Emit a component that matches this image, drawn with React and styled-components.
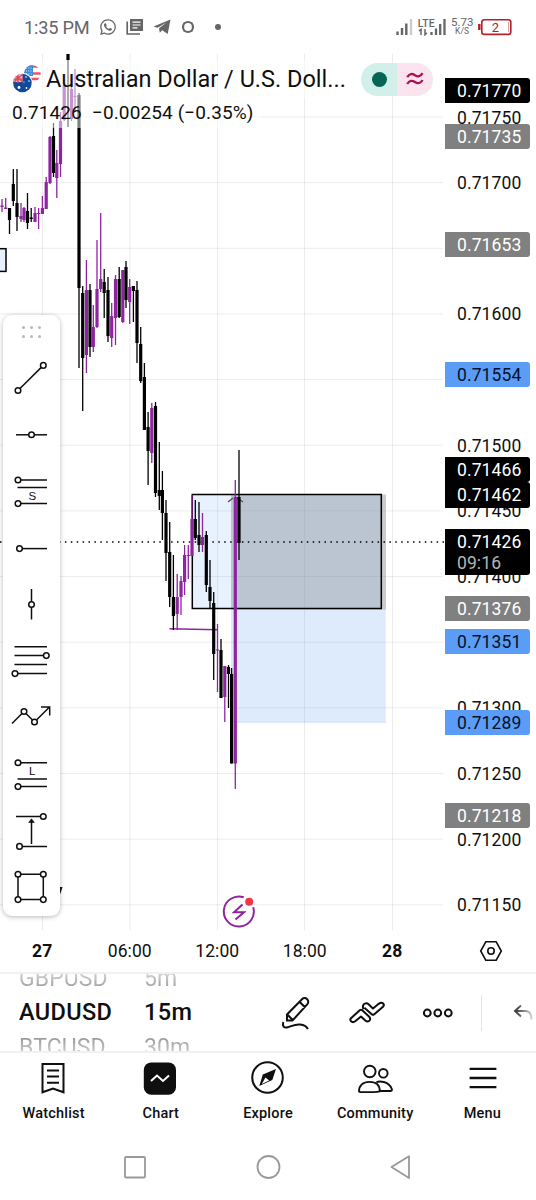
import React from "react";
import styled, { createGlobalStyle } from "styled-components";
import { FaWhatsapp } from "react-icons/fa";

const Global = createGlobalStyle`
  * { box-sizing: border-box; }
  body { margin: 0; background: #fff; font-family: Roboto, "Liberation Sans", sans-serif; color: #0f0f0f; }
`;

const PURPLE = "#8e24a0";

const Screen = styled.div`
  width: 536px;
  height: 1200px;
  display: flex;
  flex-direction: column;
  background: #fff;
  overflow: hidden;
`;

/* ---------- status bar ---------- */
const StatusBar = styled.header`
  height: 54px;
  flex: none;
  display: flex;
  align-items: center;
  justify-content: space-between;
  padding: 0 24px;
  color: #666;
`;
const StatusGroup = styled.div`
  display: flex;
  align-items: center;
  gap: ${(p) => p.$gap}px;
`;
const Clock = styled.span`
  font-size: 18.2px;
  letter-spacing: -0.2px;
  width: 66px;
  white-space: nowrap;
`;
const Speed = styled.span`
  font-size: 11.5px;
  line-height: 9px;
  text-align: center;
  width: 22px;
  small { display: block; font-size: 8.5px; line-height: 9px; }
`;

/* ---------- chart ---------- */
const ChartArea = styled.main`
  position: relative;
  height: 920px;
  flex: none;
  display: grid;
  grid-template: 876px 42px / 445px 91px;
  border-bottom: 2px solid #f1f1f1;
`;
const Plot = styled.svg`
  display: block;
`;
const PriceAxis = styled.aside`
  position: relative;
`;
const priceColors = {
  plain: ["transparent", "#0f0f0f"],
  black: ["#000", "#fff"],
  gray: ["#808080", "#fff"],
  blue: ["#5b9cf6", "#04122b"],
};
const Price = styled.div`
  position: absolute;
  left: 0;
  top: ${(p) => p.$y - 54 - 12.5}px;
  width: 85px;
  height: ${(p) => (p.$tall ? 46 : 25.3)}px;
  padding-left: 12px;
  border-radius: 0 3px 3px 0;
  font-size: 17.5px;
  line-height: 26.6px;
  letter-spacing: 0.1px;
  background: ${(p) => priceColors[p.$kind][0]};
  color: ${(p) => priceColors[p.$kind][1]};
  z-index: ${(p) => (p.$kind === "plain" ? 0 : 1)};
`;
const Countdown = styled.div`
  line-height: 15px;
  color: #b5b5b5;
`;
const TimeAxis = styled.div`
  display: flex;
  align-items: center;
  margin-left: -1.5px;
`;
const TimeLabel = styled.span`
  width: 87.5px;
  flex: none;
  text-align: center;
  font-size: 17.5px;
  letter-spacing: 0.1px;
  font-weight: ${(p) => (p.$bold ? 700 : 400)};
`;
const AxisSettings = styled.div`
  display: flex;
  align-items: center;
  justify-content: center;
`;
const Legend = styled.section`
  position: absolute;
  left: 0;
  top: 6px;
  width: 436px;
  height: 68px;
`;
const LegendTitle = styled.div`
  display: flex;
  align-items: center;
  height: 38px;
  padding-left: 12px;
  background: linear-gradient(to right, rgba(255, 255, 255, 0.5) 350px, transparent 350px);
`;
const PairName = styled.h1`
  margin: 0 0 0 4px;
  width: 314.5px;
  font-size: 23.5px;
  font-weight: 400;
  white-space: nowrap;
`;
const LegendValues = styled.div`
  display: flex;
  gap: 10px;
  width: 262px;
  height: 30px;
  padding-left: 12px;
  font-size: 19px;
  line-height: 29px;
  letter-spacing: 0.12px;
  white-space: nowrap;
  background: rgba(255, 255, 255, 0.5);
`;
const Pill = styled.div`
  display: flex;
  width: 72px;
  height: 33px;
  flex: none;
  border-radius: 17px;
  overflow: hidden;
`;
const PillHalf = styled.div`
  flex: 1;
  display: flex;
  align-items: center;
  justify-content: center;
  background: ${(p) => p.$bg};
`;
const MarketDot = styled.i`
  width: 15px;
  height: 15px;
  margin-left: 2px;
  border-radius: 50%;
  background: #056656;
`;

const DrawPanel = styled.div`
  position: absolute;
  left: 3px;
  top: 260.5px;
  width: 57px;
  height: 601px;
  padding-top: 11px;
  border-radius: 9px;
  background: #fff;
  box-shadow: 0 1px 5px rgba(0, 0, 0, 0.28);
  display: flex;
  flex-direction: column;
  align-items: center;
`;
const Grip = styled.div`
  display: grid;
  grid-template-columns: repeat(3, 3px);
  align-content: start;
  gap: 6px 4.7px;
  height: 24.2px;
  i { width: 3px; height: 3px; border-radius: 50%; background: #b8b8b8; }
`;
const Tool = styled.button`
  width: 56px;
  height: 56.6px;
  flex: none;
  padding: 0;
  border: 0;
  margin-right: 1px;
  background: none;
  display: flex;
  align-items: center;
  justify-content: center;
  svg { stroke: #0f0f0f; stroke-width: 1.5; fill: none; overflow: visible; }
  circle { fill: #fff; }
  text { stroke: none; fill: #0f0f0f; font-size: 11.5px; text-anchor: middle; }
`;

/* ---------- bottom ---------- */
const QuickBar = styled.section`
  height: 79px;
  flex: none;
  display: flex;
  border-bottom: 2px solid #f1f1f1;
  overflow: hidden;
`;
const Wheel = styled.div`
  width: ${(p) => p.$width}px;
  padding: 2px 0 0 19px;
  display: flex;
  flex-direction: column;
  justify-content: center;
  flex: none;
`;
const WheelItem = styled.span`
  height: ${(p) => (p.$active ? 35 : 34.5)}px;
  line-height: ${(p) => (p.$active ? 33 : 34.5)}px;
  flex: none;
  font-size: ${(p) => (p.$active ? 23.5 : 23)}px;
  font-weight: ${(p) => (p.$active ? 500 : 400)};
  letter-spacing: ${(p) => (p.$active ? 0.35 : 0.1)}px;
  ${(p) => !p.$active && `color: transparent; background-clip: text; background-image: linear-gradient(${p.$dir}, #999 20%, #ddd 75%);`}
`;
const Actions = styled.div`
  flex: 1;
  display: flex;
  align-items: center;
  margin-left: -1.5px;
`;
const Action = styled.button`
  width: 71px;
  flex: none;
  padding: 0;
  border: 0;
  background: none;
  display: flex;
  justify-content: center;
`;
const Divider = styled.i`
  width: 1px;
  height: 36px;
  margin: 0 31px 0 7px;
  background: #e4e4e4;
`;
const Tabs = styled.nav`
  height: 76px;
  flex: none;
  display: flex;
`;
const Tab = styled.a`
  flex: 1;
  display: flex;
  flex-direction: column;
  align-items: center;
  padding-top: 8px;
  font-size: 14.5px;
  font-weight: 500;
  letter-spacing: 0.2px;
  line-height: 18px;
  gap: 8px;
  svg { margin-right: 1px; }
`;
const SystemNav = styled.footer`
  flex: 1;
  display: flex;
  justify-content: center;
  padding: 25px 1px 0 0;
  gap: 107px;
`;

const grid = {
  v: [42.5, 130, 217.5, 304.5, 392.5],
  h: Array.from({ length: 13 }, (_, i) => 117 + i * 65.65),
};

/* x, high, low, body top, body bottom, bullish */
const candles = [
  [2, 199, 212, 205.5, 207, 1], [5.7, 198, 209, 207.5, 209, 1], [9.5, 208, 234, 208, 220, 0],
  [13.3, 169, 206, 184, 201, 0], [17, 169, 231, 203, 217, 0], [21, 203, 222, 216, 219, 1],
  [24, 207, 222, 208, 220, 1], [27.5, 193, 229, 211, 223, 0], [31.2, 208, 222, 217.5, 219, 0],
  [35, 207, 222, 213, 222, 1], [38.6, 208, 229, 213, 214, 1], [42.4, 196, 214, 208, 214, 1],
  [46.2, 177, 209, 182, 209, 1], [50, 136, 184, 137, 183, 1], [53.5, 123, 177, 136, 173, 0],
  [56.8, 150, 198, 163, 178, 1], [60.5, 112, 177, 121, 164, 1], [64.2, 83, 121, 85, 120, 1],
  [68, 54, 127, 54, 60, 0], [71.5, 78, 121, 89, 119, 1], [75, 69, 112, 96, 97, 1],
  [79, 93, 368, 95, 288, 0], [82.7, 286, 411, 293, 358, 0], [86.4, 260, 373, 290, 355, 1],
  [90, 284, 357, 290, 347, 0], [93.3, 305, 352, 327, 347, 1], [97, 240, 328, 289, 327, 1],
  [100.7, 213, 292, 279, 289, 1], [104.2, 269, 318, 282, 293, 0], [108, 277, 342, 290, 336, 0],
  [111.7, 303, 347, 316, 338, 1], [115.5, 275, 345, 279, 318, 1], [119.2, 267, 318, 279, 317, 0],
  [122.8, 270, 323, 270, 322, 1], [126, 261, 308, 267, 300, 0], [129.7, 279, 324, 287, 302, 1],
  [133.4, 286, 322, 286, 291, 0], [137, 281, 363, 290, 343, 0], [140.7, 327, 383, 344, 381, 0],
  [144.4, 363, 430, 377, 430, 0], [148.1, 412, 485, 427, 451, 0], [151.8, 403, 463, 408, 453, 1],
  [155.5, 402, 497, 406, 493, 0], [159.3, 442, 510, 490, 496, 0], [162.4, 471, 540, 490, 513, 0],
  [166, 500, 581, 513, 553, 0], [169.7, 522, 607, 552, 597, 0], [173.4, 555, 630, 597, 616, 0],
  [177.2, 574, 630, 597, 614, 1], [181, 576, 615, 581, 597, 1], [184.6, 545, 595, 555, 582, 1],
  [188.3, 545, 579, 555, 556, 1], [192, 495, 556, 519, 556, 1], [195.3, 500, 540, 519, 538, 0],
  [199, 502, 552, 535, 545, 0], [202.5, 513, 552, 537, 545, 1], [206.3, 531, 592, 535, 585, 0],
  [210, 560, 608, 587, 601, 0], [213.7, 592, 680, 603, 654, 0], [217.5, 624, 692, 649.5, 650.5, 1],
  [221, 639, 698, 650, 698, 0], [224.8, 666, 722, 666, 697, 1], [228.5, 665, 708, 667, 674, 0],
  [231.6, 668, 763.5, 674, 763.5, 0], [235.3, 480, 789, 497, 763.5, 1], [239, 450, 560, 497, 543, 0],
];

function Chart() {
  return (
    <Plot width="445" height="876" viewBox="0 54 445 876">
      <g stroke="#000" strokeOpacity=".075" strokeWidth="1">
        {grid.v.map((x) => <line key={x} x1={x} x2={x} y1="54" y2="930" />)}
        {grid.h.map((y) => <line key={y} x1="0" x2="443" y1={y} y2={y} />)}
      </g>
      <rect x="-4" y="248.7" width="10" height="22.7" fill="#e6f0fe" stroke="#000" strokeWidth="1.5" />
      <rect x="231" y="494.5" width="155" height="115" fill="#808080" fillOpacity=".41" />
      <rect x="192.3" y="494.7" width="189.5" height="113.8" fill="#5b9cf6" fillOpacity=".14" />
      <rect x="231" y="609" width="154.7" height="113.5" fill="#5b9cf6" fillOpacity=".2" />
      <path d="M231 722.2H385.7" stroke="#5b9cf6" strokeOpacity=".2" />
      <rect x="192.3" y="494.5" width="189" height="114" fill="none" stroke="#000" strokeWidth="1.5" />
      <path d="M228 502l5-4M243 502l-6-4" stroke="#555" strokeWidth="1.5" />
      <path d="M169.5 628.8L217.5 629.8" stroke={PURPLE} strokeWidth="1.4" />
      <line x1="0" x2="445" y1="542" y2="542" stroke="#000" strokeWidth="1.5" strokeDasharray="1.5 4.4" />
      {candles.map(([x, hi, lo, top, bottom, up]) => (
        <g key={x} fill={up ? PURPLE : "#000"}>
          <rect x={x - 0.65} y={hi} width="1.3" height={lo - hi} />
          <rect x={x - 1.6} y={top} width="3.2" height={bottom - top} />
        </g>
      ))}
      <path d="M59 887h3.5l-2 6.5h-1.5z" fill="#111" />
      <g fill="none" stroke={PURPLE} strokeWidth="2">
        <path d="M243.7 897.3A15 15 0 1 0 253.2 907.2" />
        <path d="M242.5 904.5L234 912.3H244L235.5 919.5" strokeLinejoin="miter" />
      </g>
      <circle cx="249.2" cy="901.7" r="4" fill="#f23645" />
    </Plot>
  );
}

function Flags() {
  return (
    <svg width="30" height="30" viewBox="12 64 30 30">
      <defs>
        <clipPath id="us"><circle cx="32.3" cy="73.6" r="8.4" /></clipPath>
        <clipPath id="au"><circle cx="22.4" cy="83" r="9.3" /></clipPath>
      </defs>
      <g clipPath="url(#us)">
        <rect x="23" y="64" width="19" height="19" fill="#fff" />
        <path d="M23 66.5h19M23 73.5h19M23 79h19" stroke="#e65a60" strokeWidth="2.6" />
        <rect x="23" y="64" width="10" height="12" fill="#3d8ad8" />
        <path d="M26 68h6M26 71h6M26 74h6" stroke="#d9ebff" strokeDasharray="1 1.3" />
      </g>
      <circle cx="22.4" cy="83" r="10.3" fill="#fff" />
      <g clipPath="url(#au)">
        <rect x="13" y="73" width="20" height="20" fill="#0f4a9c" />
        <path d="M13 73h9.5v9H13z" fill="#e9c6d4" />
        <path d="M13 74l10 8M23 74l-9 8M18 73v10M13 79h10" stroke="#dc4a58" strokeWidth="1.5" />
        <g fill="#fff"><circle cx="19" cy="87.5" r="1.4" /><circle cx="26" cy="77" r=".8" /><circle cx="29" cy="81" r=".8" /><circle cx="26.5" cy="88" r=".9" /><circle cx="24" cy="82" r=".6" /></g>
      </g>
    </svg>
  );
}

const C = (p) => <circle r="2.8" {...p} />;
const toolIcons = [
  <><path d="M-13 12.5L12.3 -12.6" /><C cx="-13" cy="12.5" /><C cx="12.3" cy="-12.6" /></>,
  <><path d="M-15 .8H16" /><C cx=".5" cy=".8" /></>,
  <><path d="M-13 -11H16M-13.5 -3.5H16M-13 12.6H16" /><C cx="-13" cy="-11" /><C cx="-13" cy="12.6" /><text x="1.2" y="8.8">S</text></>,
  <><path d="M-11.5 .6H16" /><C cx="-11.5" cy=".6" /></>,
  <><path d="M.5 -15V15.5" /><C cx=".5" cy=".5" /></>,
  <><path d="M-16.5 -14.3H16M-16.5 -5.4H16M-16.5 3.6H16M-16.5 12.6H16" /><C cx="15.3" cy="-5.4" /><C cx="-16" cy="12.6" /></>,
  <><path d="M-19 6.5L-7 -5.5L3.5 5L18.5 -10M10 -10H18.7V-1.5" /><C cx="-7" cy="-5.5" /><C cx="3.5" cy="5" /></>,
  <><path d="M-13 -11.3H16M-13.5 5H16M-13 12.6H16" /><C cx="-13" cy="-11.3" /><C cx="-13" cy="12.6" /><text x="1.2" y="1">L</text></>,
  <><path d="M-15 -14.5H12.3M-11.5 15.4H16M.5 13V-9" /><path d="M-2.3 -8.5L.5 -12.2L3.3 -8.5z" fill="#0f0f0f" strokeWidth=".6" /><C cx="12.3" cy="-14.5" /><C cx="-11.5" cy="15.4" /></>,
  <><path d="M-13 -12.7H12.3V12.6H-13z" /><C cx="-13" cy="-12.7" /><C cx="12.3" cy="-12.7" /><C cx="-13" cy="12.6" /><C cx="12.3" cy="12.6" /></>,
];

const prices = [
  ...["0.71750", "0.71700", null, "0.71600", null, "0.71500", "0.71450", "0.71400", null, "0.71300", "0.71250", "0.71200", "0.71150"]
    .map((t, i) => t && [t, 117 + i * 65.65, "plain"]).filter(Boolean),
  ["0.71770", 90, "black"], ["0.71735", 136.3, "gray"], ["0.71653", 244.4, "gray"],
  ["0.71554", 374, "blue"], ["0.71466", 469.6, "black"], ["0.71462", 494.8, "black"],
  ["0.71376", 608.2, "gray"], ["0.71351", 641, "blue"], ["0.71289", 722.3, "blue"], ["0.71218", 815.5, "gray"],
];

const stroke = { fill: "none", stroke: "#0f0f0f", strokeWidth: 2 };

const tabs = [
  ["Watchlist", <path d="M7.5 3H28.5V31.3L18 27.5L7.5 31.3zM12 9.5H24M12 15.5H24M12 21.8H24" {...stroke} />],
  ["Chart", <><rect x="1.8" y="1.4" width="32.2" height="32.4" rx="7.5" fill="#0f0f0f" /><path d="M9 20L15 14.5L21 20L27 14.5" fill="none" stroke="#fff" strokeWidth="2" /></>],
  ["Explore", <><circle cx="17.5" cy="16.5" r="15.3" {...stroke} /><path d="M26 8L22.3 19L9.3 25L12.8 13.5z" fill="#0f0f0f" /><path d="M15.5 16.5L19.2 19.5L11.8 23z" fill="#fff" /></>],
  ["Community", <g {...stroke} strokeWidth="1.9"><circle cx="12.8" cy="10.5" r="5.8" /><circle cx="26.3" cy="12.3" r="4.3" /><path d="M2 30.3c0-6 4-9.4 10.5-9.4s10.3 3.4 10.3 9.4q-3 .8-6 .8H5q-3 0-3-.8zM19.5 21.2c2-.9 12-2 15.3 6.8.4 1.6-.3 2-1.5 2H23" /></g>],
  ["Menu", <path d="M5.6 7.8H32.4M5.6 17H32.4M5.6 26.2H32.4" {...stroke} strokeWidth="2.3" />],
];

export default function App() {
  return (
    <Screen>
      <Global />
      <StatusBar>
        <StatusGroup $gap={9}>
          <Clock>1:35 PM</Clock>
          <FaWhatsapp size={18} />
          <svg width="18" height="18" viewBox="0 0 18 18"><path d="M4 1h13v12H4z" fill="#666" /><path d="M1.2 3.5V16H14" fill="none" stroke="#666" strokeWidth="1.7" /><path d="M6.5 4.2h8M6.5 7h8M6.5 9.8h5" stroke="#fff" strokeWidth="1.2" /></svg>
          <svg width="18" height="18" viewBox="0 0 18 18"><path d="M.5 8.5L17.5 1.5L14.7 16L9.2 12.2L6.8 14.7L6 10.3L13.5 4.5L4.5 9.8z" fill="#666" /></svg>
          <svg width="16" height="16" viewBox="0 0 16 16"><circle cx="8" cy="8" r="5" fill="none" stroke="#666" strokeWidth="2.2" /><path d="M3.6 3.6l1 1M12.4 3.6l-1 1M3.6 12.4l1-1M12.4 12.4l-1-1" stroke="#666" strokeWidth="1.6" /></svg>
          <svg width="30" height="16" viewBox="0 0 30 16"><circle cx="13" cy="8" r="3" fill="#666" /></svg>
        </StatusGroup>
        <StatusGroup $gap={5}>
          <svg width="17" height="18" viewBox="0 0 17 18"><path d="M1.5 17v-3.5M6 17V10M10.3 17V5.5" stroke="#666" strokeWidth="2.4" /><path d="M15 17V1" stroke="#ccc" strokeWidth="2.4" /></svg>
          <svg width="28" height="18" viewBox="0 0 28 18"><text x="-.2" y="8.6" fontSize="10.5" fontWeight="500" fill="#666" textLength="17">LTE</text><path d="M3 17V11.3L1 13M7 11v5.7l1.8-1.8" fill="none" stroke="#666" strokeWidth="1.5" /><path d="M13.5 17v-3M18 17V10.5M22.2 17V6M26.5 17V1" stroke="#666" strokeWidth="2.3" /></svg>
          <Speed>5.73<small>K/S</small></Speed>
          <svg width="34" height="18" viewBox="0 0 34 18"><rect x="3.8" y="1.8" width="29" height="14.6" rx="2.5" fill="none" stroke="#b3202a" strokeWidth="1.6" /><path d="M1.3 6v6" stroke="#b3202a" strokeWidth="2.5" /><path d="M30.5 4v10" stroke="#d9a0a4" /><text x="17.5" y="13.6" textAnchor="middle" fontSize="13" fill="#b3202a">2</text></svg>
        </StatusGroup>
      </StatusBar>

      <ChartArea>
        <Chart />
        <PriceAxis>
          {prices.map(([t, y, k]) => <Price key={t} $y={y} $kind={k}>{t}</Price>)}
          <Price $y={541.8} $kind="black" $tall>0.71426<Countdown>09:16</Countdown></Price>
        </PriceAxis>
        <TimeAxis>
          <TimeLabel $bold>27</TimeLabel>
          <TimeLabel>06:00</TimeLabel>
          <TimeLabel>12:00</TimeLabel>
          <TimeLabel>18:00</TimeLabel>
          <TimeLabel $bold>28</TimeLabel>
        </TimeAxis>
        <AxisSettings>
          <svg width="24" height="24" viewBox="-12 -12 24 24" fill="none" stroke="#0f0f0f" strokeWidth="1.6"><path d="M-5.2 -9.2H5.2L10.3 0L5.2 9.2H-5.2L-10.3 0z" /><circle r="3.2" /></svg>
        </AxisSettings>

        <Legend>
          <LegendTitle>
            <Flags />
            <PairName>Australian Dollar / U.S. Doll...</PairName>
            <Pill>
              <PillHalf $bg="#d3efe9"><MarketDot /></PillHalf>
              <PillHalf $bg="#fce4ee">
                <svg width="18" height="14" viewBox="0 0 18 14" fill="none" stroke="#ab1254" strokeWidth="2.3"><path d="M1.2 5.2C3.5 1.5 6 1.2 9 3.2S14.5 4.5 16.6 1.2M1.2 12C3.5 8.3 6 8 9 10S14.5 11.3 16.6 8" /></svg>
              </PillHalf>
            </Pill>
          </LegendTitle>
          <LegendValues><span>0.71426</span><span>−0.00254 (−0.35%)</span></LegendValues>
        </Legend>

        <DrawPanel>
          <Grip>{[0, 1, 2, 3, 4, 5].map((i) => <i key={i} />)}</Grip>
          {toolIcons.map((icon, i) => (
            <Tool key={i}><svg width="36" height="36" viewBox="-18 -18 36 36">{icon}</svg></Tool>
          ))}
        </DrawPanel>
      </ChartArea>

      <QuickBar>
        <Wheel $width={125}>
          <WheelItem $dir="to top">GBPUSD</WheelItem>
          <WheelItem $active>AUDUSD</WheelItem>
          <WheelItem $dir="to bottom">BTCUSD</WheelItem>
        </Wheel>
        <Wheel $width={137}>
          <WheelItem $dir="to top">5m</WheelItem>
          <WheelItem $active>15m</WheelItem>
          <WheelItem $dir="to bottom">30m</WheelItem>
        </Wheel>
        <Actions>
          <Action>
            <svg width="30" height="36" viewBox="0 0 30 36" {...stroke}><path d="M6 25.5V19.5L21 4.2a3.6 3.6 0 0 1 5.2 5.2L11.5 25.5zM18.5 6.8L24 12.3M6.3 19.5L11.7 25" /><path d="M2.3 27C1 31 3 33.3 6.5 32.3C11 31 14 29 19 29.5C23.5 30 26 32 26.8 34.2" /></svg>
          </Action>
          <Action>
            <svg width="36" height="24" viewBox="0 0 36 24" {...stroke} strokeLinejoin="round"><path d="M2 17.2L11 9.1Q12 8.3 13 9.1L20 15.5Q22.3 18 20.3 19.8Q18.3 21.2 16.3 19.5L12 15.5L6.2 20.3Q3.8 22 2 20.3Q.6 18.5 2 17.2z" /><path d="M14.5 8.2C13.3 5.8 14 3.4 15.8 2.6Q17.8 1.6 19.6 3.2L24 7.6L30 2.6Q32.3 .8 34.2 2.6Q35.6 4.2 34 5.8L25 13.4Q24 14.2 23 13.4L15.4 6.8" /></svg>
          </Action>
          <Action>
            <svg width="32" height="12" viewBox="0 0 32 12" {...stroke}><circle cx="5.3" cy="6" r="3.4" /><circle cx="15.8" cy="6" r="3.4" /><circle cx="26.3" cy="6" r="3.4" /></svg>
          </Action>
          <Divider />
          <svg width="20" height="18" viewBox="0 0 20 18" fill="none" strokeWidth="2"><defs><linearGradient id="fade" gradientUnits="userSpaceOnUse" x1="0" x2="20" y1="0" y2="0"><stop offset=".2" stopColor="#444" /><stop offset="1" stopColor="#ddd" /></linearGradient></defs><path d="M8 1.5L2 7L8 12.5M2 7H12.5Q18.5 7 18.5 15.5" stroke="url(#fade)" /></svg>
        </Actions>
      </QuickBar>

      <Tabs>
        {tabs.map(([name, icon]) => (
          <Tab key={name}><svg width="36" height="36" viewBox="0 0 36 36">{icon}</svg>{name}</Tab>
        ))}
      </Tabs>
      <SystemNav>
        <svg width="26" height="26" viewBox="0 0 26 26" fill="none" stroke="#999" strokeWidth="1.8"><rect x="3" y="3" width="20" height="20.5" rx="1" /></svg>
        <svg width="26" height="26" viewBox="0 0 26 26" fill="none" stroke="#999" strokeWidth="1.8"><circle cx="13.5" cy="13" r="11" /></svg>
        <svg width="26" height="26" viewBox="0 0 26 26" fill="none" stroke="#999" strokeWidth="1.8" strokeLinejoin="round"><path d="M3.5 13L21 2.3V24z" /></svg>
      </SystemNav>
    </Screen>
  );
}
